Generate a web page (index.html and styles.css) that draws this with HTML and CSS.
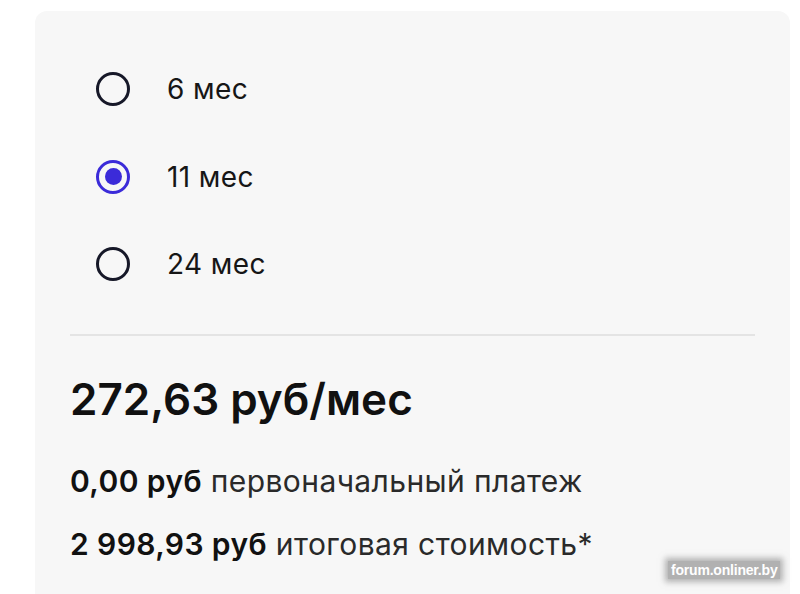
FILE: index.html
```html
<!DOCTYPE html>
<html lang="ru">
<head>
    <meta charset="UTF-8">
    <meta name="viewport" content="width=device-width, initial-scale=1.0">
    <title>Рассрочка</title>
    <link rel="stylesheet" href="styles.css">
</head>
<body>

    <div class="card">
        <!-- Срок рассрочки -->
        <div class="terms">
            <label class="term">
                <input type="radio" name="term" value="6">
                <span class="radio"></span>
                <span class="term-text">6 мес</span>
            </label>
            <label class="term">
                <input type="radio" name="term" value="11" checked>
                <span class="radio"></span>
                <span class="term-text">11 мес</span>
            </label>
            <label class="term">
                <input type="radio" name="term" value="24">
                <span class="radio"></span>
                <span class="term-text">24 мес</span>
            </label>
        </div>

        <hr class="divider">

        <div class="price">272,63 руб/мес</div>
        <p class="line"><b>0,00 руб</b> первоначальный платеж</p>
        <p class="line"><b>2 998,93 руб</b> итоговая стоимость*</p>
    </div>

    <div class="watermark">forum.onliner.by</div>

</body>
</html>
```

FILE: styles.css
```css
body {
    margin: 0;
    background: #ffffff;
    font-family: Inter, 'Noto Sans', sans-serif;
    color: #111111;
    height: 594px;
    overflow: hidden;
}

.card {
    margin: 11px 10px 0 35px;
    height: 640px;
    padding: 0 35px;
    background-color: #f7f7f7;
    border-radius: 12px;
}

.terms {
    display: flex;
    flex-direction: column;
    padding-top: 55px;
}

.term {
    display: flex;
    align-items: center;
    height: 46px;
    margin-bottom: 41.5px;
    padding-left: 26px;
    cursor: pointer;
}

.term input {
    display: none;
}

.radio {
    width: 28px;
    height: 28px;
    border: 3.5px solid #161828;
    border-radius: 50%;
    display: flex;
    align-items: center;
    justify-content: center;
    margin-right: 37px;
    flex-shrink: 0;
}

.term input:checked + .radio {
    border-color: #3b2bd9;
}

.term input:checked + .radio::after {
    content: '';
    width: 17px;
    height: 17px;
    border-radius: 50%;
    background-color: #3b2bd9;
}

.term-text {
    font-size: 28px;
    letter-spacing: 0.4px;
    color: #161616;
}

.divider {
    border: none;
    border-top: 2px solid #e4e4e4;
    margin: 5px 0 0;
}

.price {
    font-size: 44px;
    font-weight: 600;
    margin-top: 37px;
    line-height: 53px;
}

.line {
    font-size: 30px;
    letter-spacing: 0.4px;
    margin: 0;
    line-height: 34px;
    color: #2a2a2a;
}

.line:first-of-type {
    margin-top: 38px;
}

.line + .line {
    margin-top: 29px;
}

.line b {
    font-weight: 600;
    color: #111111;
}

.watermark {
    position: absolute;
    left: 668px;
    top: 561px;
    font-family: 'Liberation Sans', sans-serif;
    font-weight: bold;
    font-size: 14px;
    color: #ffffff;
    padding: 1px 3px;
    background: rgba(120, 120, 120, 0.55);
    box-shadow: 0 0 6px 3px rgba(120, 120, 120, 0.55);
    letter-spacing: -0.2px;
}
```
